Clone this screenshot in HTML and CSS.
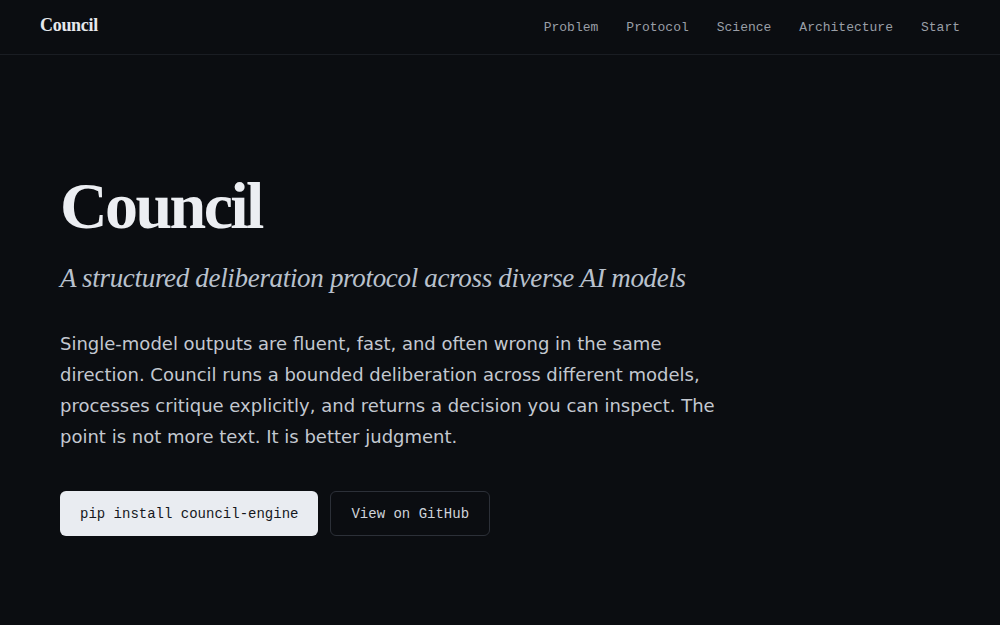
FILE: index.html
```html
<!DOCTYPE html>
<html lang="en">
<head>
<meta charset="utf-8">
<title>Council</title>
<link rel="stylesheet" href="styles.css">
</head>
<body>
<header class="topbar">
  <a class="brand" href="#">Council</a>
  <nav class="nav">
    <a href="#problem">Problem</a>
    <a href="#protocol">Protocol</a>
    <a href="#science">Science</a>
    <a href="#architecture">Architecture</a>
    <a href="#start">Start</a>
  </nav>
</header>
<main class="hero">
  <h1 class="title">Council</h1>
  <p class="subtitle">A structured deliberation protocol across diverse AI models</p>
  <p class="lead">Single-model outputs are fluent, fast, and often wrong in the same direction. Council runs a bounded deliberation across different models, processes critique explicitly, and returns a decision you can inspect. The point is not more text. It is better judgment.</p>
  <div class="actions">
    <a class="btn btn-primary" href="#start">pip install council-engine</a>
    <a class="btn btn-ghost" href="#">View on GitHub</a>
  </div>
</main>
</body>
</html>
```

FILE: styles.css
```css
* { box-sizing: border-box; }
html, body { margin: 0; padding: 0; }
body {
  background: #0b0d11;
  color: #c3c8d0;
  font-family: "DejaVu Sans", sans-serif;
  min-height: 625px;
}
a { text-decoration: none; color: inherit; }

.topbar {
  height: 55px;
  display: flex;
  align-items: center;
  justify-content: space-between;
  padding: 0 40px;
  border-bottom: 1px solid #1a1d23;
}
.brand {
  font-family: "Liberation Serif", serif;
  font-weight: 700;
  font-size: 18px;
  color: #e6e8ec;
  letter-spacing: -0.3px;
  margin-top: -4px;
}
.nav {
  display: flex;
  gap: 28px;
  font-family: "Liberation Mono", monospace;
  font-size: 13px;
  color: #9a9fa7;
}

.hero {
  padding: 118px 60px 0;
}
.title {
  margin: 0;
  font-family: "Liberation Serif", serif;
  font-weight: 700;
  font-size: 66px;
  line-height: 1;
  letter-spacing: -2.6px;
  color: #eceef2;
}
.subtitle {
  margin: 22px 0 0;
  font-family: "Liberation Serif", serif;
  font-style: italic;
  font-size: 27px;
  line-height: 1.3;
  color: #b9c1cd;
  letter-spacing: -0.32px;
}
.lead {
  margin: 32px 0 0;
  max-width: 680px;
  font-size: 18px;
  line-height: 31px;
  color: #c3c8d0;
}
.actions {
  display: flex;
  gap: 12px;
  margin-top: 39px;
}
.btn {
  display: inline-flex;
  align-items: center;
  height: 45px;
  padding: 0 20px;
  border-radius: 6px;
  font-family: "Liberation Mono", monospace;
  font-size: 14px;
}
.btn-primary {
  background: #e9ecf1;
  color: #15181d;
}
.btn-ghost {
  border: 1px solid #2c3038;
  color: #cfd3da;
}
```
